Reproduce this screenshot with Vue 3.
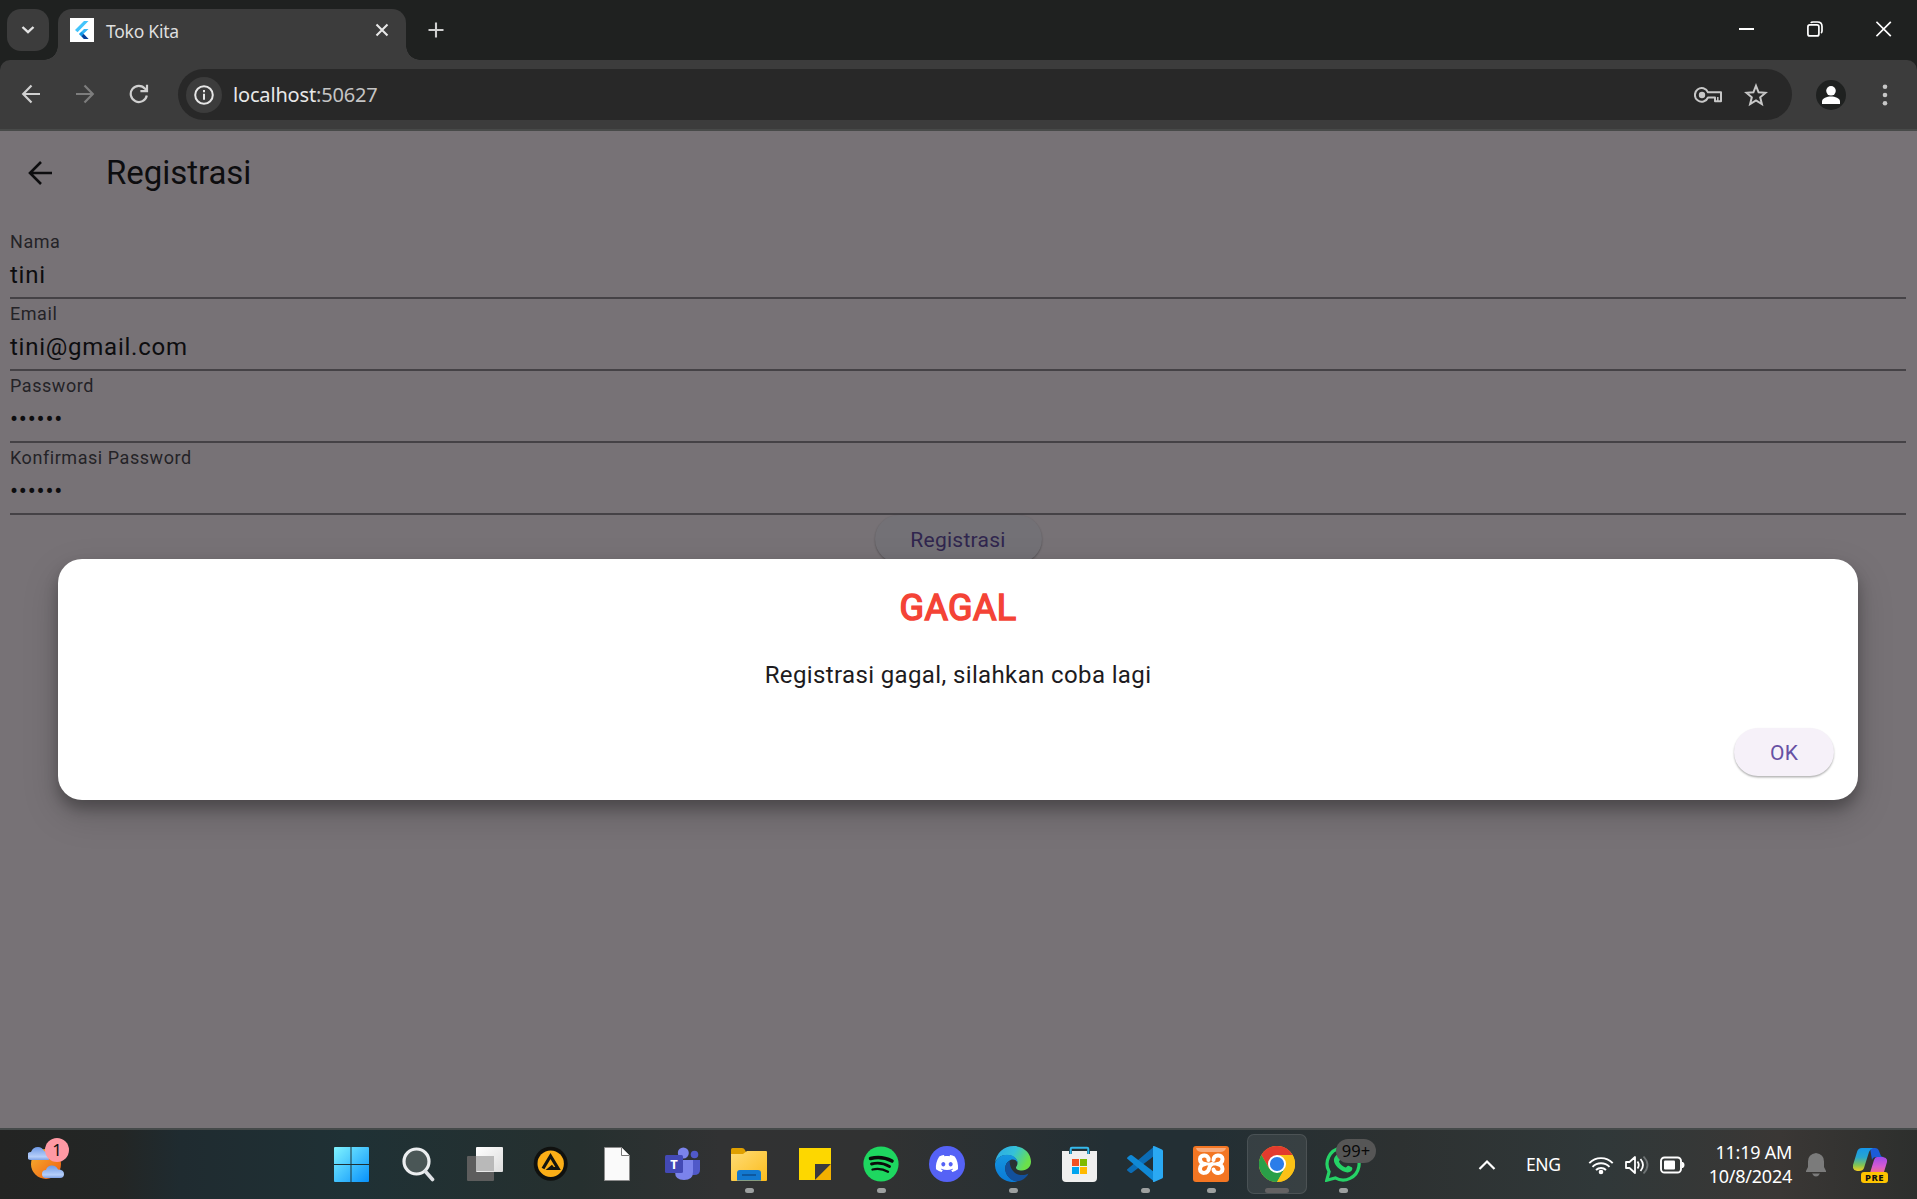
<script setup>
const fields = [
  { label: 'Nama', value: 'tini' },
  { label: 'Email', value: 'tini@gmail.com' },
  { label: 'Password', value: '••••••' },
  { label: 'Konfirmasi Password', value: '••••••' },
]
</script>

<template>
  <div class="desktop">
    <header class="tabstrip">
      <button class="tabsearch">
        <svg width="14" height="10" viewBox="0 0 14 10"><path d="M1.500 2l5.500 5.200L12.500 2" fill="none" stroke="#e3e3e3" stroke-width="2.400" /></svg>
      </button>
      <div class="tab">
        <svg class="favicon" width="24" height="24" viewBox="0 0 24 24">
          <rect width="24" height="24" fill="#fff" />
          <path d="M14 3h4.500L7.500 14.200 5 12z" fill="#43c4fb" />
          <path d="M14 11h4.500l-5.200 5 5.200 5H14l-5-5z" fill="#35b5f5" />
          <path d="M9.200 16l2.300-2.300 2.200 2.300-2.200 2.300z" fill="#1497e8" />
          <path d="M11.500 18.300l2.200-2.200 4.800 4.900H14z" fill="#0a3c96" />
        </svg>
        <span class="tab-title">Toko Kita</span>
        <svg class="tab-close" width="14" height="14" viewBox="0 0 14 14"><path d="M1.500 1.500l11 11m0-11l-11 11" stroke="#e8e8e8" stroke-width="2.100" /></svg>
      </div>
      <svg class="newtab" width="16" height="16" viewBox="0 0 16 16"><path d="M8 .5v15M.5 8h15" stroke="#cfcfcf" stroke-width="2.100" /></svg>
      <div class="winctl">
        <svg width="16" height="16" viewBox="0 0 16 16"><path d="M1 8h15" stroke="#fff" stroke-width="2" /></svg>
        <svg width="16" height="16" viewBox="0 0 16 16" fill="none" stroke="#fff" stroke-width="1.700"><rect x=".9" y="3.900" width="11" height="11" rx="2" /><path d="M3.800 1.900Q4.300 1 6 1h4.500Q15 1 15 5.500V10q0 1.400-1 2" /></svg>
        <svg width="16" height="16" viewBox="0 0 16 16"><path d="M.4.800l14.400 14.400m0-14.400L.4 15.200" stroke="#fff" stroke-width="1.700" /></svg>
      </div>
    </header>

    <nav class="toolbar">
      <svg class="nav" width="20" height="20" viewBox="0 0 20 20" fill="none" stroke="#d0d0d0" stroke-width="2.200"><path d="M19 10H2M10.500 1.500L2.200 10l8.300 8.500" /></svg>
      <svg class="nav fwd" width="20" height="20" viewBox="0 0 20 20" fill="none" stroke="#7d7d7d" stroke-width="2.200"><path d="M1 10h17M9.500 1.500l8.300 8.500-8.300 8.500" /></svg>
      <svg class="nav reload" width="20" height="20" viewBox="0 0 20 20" fill="none" stroke="#d0d0d0" stroke-width="2.200"><path d="M17.800 11.500a8.100 8.100 0 1 1-1.600-6.600L18 6.800M18 .8v6.300h-6.600" /></svg>
      <div class="omnibox">
        <span class="siteinfo">
          <svg width="20" height="20" viewBox="0 0 20 20"><circle cx="10" cy="10" r="8.800" fill="none" stroke="#e6e6e6" stroke-width="2" /><path d="M10 8.700v6M10 5v2.200" stroke="#e6e6e6" stroke-width="2" /></svg>
        </span>
        <span class="url">localhost<span class="port">:50627</span></span>
        <svg class="key" width="28" height="16" viewBox="0 0 28 16"><path d="M14 5.300h13v9h-6v-3.800h-7A6.800 6.800 0 1 1 14 5.300z" fill="none" stroke="#c7c7c7" stroke-width="2" stroke-linejoin="round" /><circle cx="8" cy="8" r="3.200" fill="#c7c7c7" /><path d="M23.800 10v4" stroke="#c7c7c7" stroke-width="1.500" /></svg>
        <svg class="star" width="24" height="24" viewBox="0 0 24 24"><path d="M12 2.800l2.600 6.500 7 .500-5.400 4.500 1.700 6.900L12 17.500l-5.900 3.700 1.700-6.900-5.400-4.500 7-.5z" fill="none" stroke="#c7c7c7" stroke-width="2" /></svg>
      </div>
      <svg class="avatar" width="30" height="30" viewBox="0 0 30 30"><circle cx="15" cy="15" r="15" fill="#1f2120" /><circle cx="15" cy="10.800" r="4.800" fill="#fff" /><path d="M6 24v-2.500c0-3.500 5-5 9-5s9 1.500 9 5V24z" fill="#fff" /></svg>
      <svg class="menu" width="6" height="24" viewBox="0 0 6 24" fill="#c7c7c7"><circle cx="3" cy="3.700" r="2.300" /><circle cx="3" cy="12" r="2.300" /><circle cx="3" cy="20.300" r="2.300" /></svg>
    </nav>

    <main class="page">
      <div class="appbar">
        <svg width="26" height="26" viewBox="0 0 26 26" fill="none" stroke="#0d0d0f" stroke-width="2.600"><path d="M25 13H3.500M14 2L3 13l11 11" /></svg>
        <h1>Registrasi</h1>
      </div>
      <form class="form">
        <div v-for="f in fields" :key="f.label" class="field">
          <label>{{ f.label }}</label>
          <div class="value">{{ f.value }}</div>
        </div>
        <div class="submit">Registrasi</div>
      </form>
      <section class="dialog">
        <h2>GAGAL</h2>
        <p>Registrasi gagal, silahkan coba lagi</p>
        <div class="ok">OK</div>
      </section>
    </main>

    <footer class="taskbar">
      <div class="weather">
        <svg width="38" height="36" viewBox="0 0 38 36">
          <defs>
            <linearGradient id="sun" x1="0" y1="0" x2="1" y2="1"><stop offset="0" stop-color="#f7b531" /><stop offset="1" stop-color="#ef5a10" /></linearGradient>
            <linearGradient id="cloud" x1="0" y1="0" x2="0" y2="1"><stop offset="0" stop-color="#6f9ae6" /><stop offset=".75" stop-color="#b6cffa" /><stop offset="1" stop-color="#7ea2e6" /></linearGradient>
          </defs>
          <circle cx="18" cy="18" r="15" fill="url(#sun)" />
          <path d="M3 14a4 4 0 0 1 0-8Q5 1 10 1q4 0 6 4 5 1 5 9z" fill="url(#cloud)" />
          <path d="M18 32a4 4 0 0 1 0-8q1-4 5-4.500 5-.5 7 4 6 0 6 4.500 0 4-4 4z" fill="url(#cloud)" />
        </svg>
        <span class="count">1</span>
      </div>

      <div class="apps">
        <div class="app">
          <svg viewBox="0 0 36 36"><defs><linearGradient id="win" gradientUnits="userSpaceOnUse" x1="1" y1="1" x2="36" y2="36"><stop offset="0" stop-color="#80f4ff" /><stop offset="1" stop-color="#0791fb" /></linearGradient></defs><path d="M2 1h15.500v17H1V2q0-1 1-1zM18.500 1H35q1 0 1 1v16H18.500zM1 19h16.500v17H2q-1 0-1-1zM18.500 19H36v16q0 1-1 1H18.500z" fill="url(#win)" /></svg>
        </div>
        <div class="app">
          <svg viewBox="0 0 36 36"><circle cx="17.500" cy="15.500" r="12.500" fill="#4a5656" stroke="#eceef0" stroke-width="3.200" /><path d="M26.500 25.500l7 8" stroke="#dfe2e6" stroke-width="3.600" stroke-linecap="round" /></svg>
        </div>
        <div class="app">
          <svg viewBox="0 0 36 36"><defs><linearGradient id="tv" x1="0" y1="0" x2="1" y2="1"><stop offset="0" stop-color="#fff" /><stop offset="1" stop-color="#dcdcdc" /></linearGradient></defs><rect y="10" width="27" height="25" rx="1" fill="#5d5d5d" /><rect x="9" y="1" width="27" height="25" rx="1" fill="url(#tv)" /><path d="M9 10h18v15H9z" fill="#b9b9b9" /></svg>
        </div>
        <div class="app">
          <svg viewBox="0 0 36 36"><circle cx="17.700" cy="17.700" r="17" fill="#10110f" /><circle cx="17.700" cy="17.700" r="13.200" fill="#fcaf17" /><path d="M10 22.500L17.500 10l7.500 12.500h-8l3-2.500" fill="none" stroke="#15150f" stroke-width="3.200" /></svg>
        </div>
        <div class="app">
          <svg viewBox="0 0 36 36"><path d="M5.500 1.500h17l8 8v25h-25z" fill="#fafafa" stroke="#8c8c8c" /><path d="M22.500 1.500v8h8" fill="#fff" stroke="#777" /></svg>
        </div>
        <div class="app">
          <svg viewBox="0 0 36 36"><circle cx="29.500" cy="8.500" r="3.800" fill="#5059c9" /><path d="M24 14h11v10q0 5-6 5h-5z" fill="#5059c9" /><circle cx="18.300" cy="7" r="5.500" fill="#7b83eb" /><path d="M10 14h18v12q0 8-9 8t-9-8z" fill="#7b83eb" /><rect y="9" width="18" height="18" rx="1.500" fill="#4349b5" /><text x="9" y="22.500" text-anchor="middle" font-size="13" font-weight="700" fill="#fff">T</text></svg>
        </div>
        <div class="app">
          <svg viewBox="0 0 36 36"><defs><linearGradient id="fold" x1="0" y1="0" x2="1" y2="1"><stop offset="0" stop-color="#ffdc75" /><stop offset="1" stop-color="#fbbc1d" /></linearGradient></defs><path d="M0 3.500Q0 2 1.500 2H11q2 0 3 2l2 4H0z" fill="#e0a000" /><path d="M0 8h12l4-3h19q1 0 1 1v28q0 1-1 1H1q-1 0-1-1z" fill="url(#fold)" /><path d="M6 34.500V27q0-3 3-3h18q3 0 3 3v7.500z" fill="#1278cf" /><path d="M11 29h14" stroke="#0c4e8f" stroke-width="1.500" /></svg>
          <i />
        </div>
        <div class="app">
          <svg viewBox="0 0 36 36"><path d="M2 2h32v16L18 34H2z" fill="#fdd700" /><path d="M18 34V18h16z" fill="#3a3a3e" /><path d="M34 18v16H18z" fill="#f3b100" /></svg>
        </div>
        <div class="app">
          <svg viewBox="0 0 36 36"><circle cx="18" cy="18" r="17.600" fill="#1ed760" /><g fill="none" stroke="#0b0b0b" stroke-linecap="round"><path d="M7.500 12.500q11-3 21.500 2.500" stroke-width="3.600" /><path d="M8.500 18q9.500-2.500 18 2.500" stroke-width="2.900" /><path d="M9.500 23.500q8-2 15.500 2.200" stroke-width="2.300" /></g></svg>
          <i />
        </div>
        <div class="app">
          <svg viewBox="0 0 36 36"><circle cx="18" cy="18" r="18" fill="#5562f6" /><path transform="translate(6.900 6.400) scale(.925)" fill="#fff" d="M20.317 4.370a19.791 19.791 0 00-4.885-1.515.074.074 0 00-.079.037c-.211.375-.445.865-.608 1.250-1.845-.276-3.680-.276-5.487 0-.164-.393-.406-.874-.618-1.250a.077.077 0 00-.079-.037 19.736 19.736 0 00-4.885 1.515.07.07 0 00-.032.028C.533 9.046-.319 13.580.099 18.058a.082.082 0 00.031.056c2.053 1.508 4.041 2.423 5.993 3.029a.078.078 0 00.084-.028c.462-.630.873-1.295 1.226-1.994a.076.076 0 00-.042-.106c-.653-.248-1.274-.550-1.872-.892a.077.077 0 01-.008-.128c.126-.094.252-.192.372-.291a.074.074 0 01.078-.011c3.928 1.793 8.180 1.793 12.061 0a.074.074 0 01.079.010c.120.099.246.198.373.292a.077.077 0 01-.007.128 12.299 12.299 0 01-1.873.891.077.077 0 00-.041.107c.360.698.772 1.363 1.225 1.993a.076.076 0 00.084.029c1.961-.607 3.950-1.522 6.002-3.029a.077.077 0 00.031-.055c.500-5.177-.838-9.674-3.549-13.660a.061.061 0 00-.031-.029zM8.020 15.331c-1.183 0-2.157-1.086-2.157-2.419 0-1.333.956-2.419 2.157-2.419 1.211 0 2.176 1.095 2.157 2.419 0 1.333-.956 2.419-2.157 2.419zm7.975 0c-1.183 0-2.157-1.086-2.157-2.419 0-1.333.955-2.419 2.157-2.419 1.211 0 2.176 1.095 2.157 2.419 0 1.333-.946 2.419-2.157 2.419z" /></svg>
        </div>
        <div class="app">
          <svg viewBox="0 0 36 36">
            <defs>
              <linearGradient id="eg" x1="0" y1="0" x2="1" y2=".4"><stop offset="0" stop-color="#2aa6e8" /><stop offset=".55" stop-color="#35c1d8" /><stop offset="1" stop-color="#6be04a" /></linearGradient>
              <linearGradient id="eb" x1="0" y1="0" x2="0" y2="1"><stop offset="0" stop-color="#1595e0" /><stop offset="1" stop-color="#0a7ad6" /></linearGradient>
            </defs>
            <path d="M0 17C1 7 9 0 18.500 0 29 0 36 7.500 36 15.500c0 5.500-4 9-9 9-4.500 0-6-1.500-6-3 0-1 1.500-1.800 1.500-4.500C22.500 12 17 9 12 9 6 9 1.500 12.500 0 17z" fill="url(#eg)" />
            <path d="M0 17.500C1.500 12 6.500 8.800 12 8.800c6 0 10.500 3.500 10.500 8-1-2.800-4-4-7-2.800C11 16 9 21 11 26.500c1.500 4.500 6 8 11.500 9C20 36.300 17 36 15 35.700 6 34.200-.5 26.500 0 17.500z" fill="url(#eb)" />
            <path d="M14.500 14.500C9.500 18 9 24 12 29c3.500 6 10 7.500 14 5.500 3.500-1.600 6-4 7.500-7-8 4-18.500.5-19-13z" fill="#12509c" />
          </svg>
          <i />
        </div>
        <div class="app">
          <svg viewBox="0 0 36 36"><path d="M9.700 9V3q0-1.200 1.200-1.200h15.200q1.200 0 1.200 1.200v6" fill="none" stroke="#35b9ec" stroke-width="2" /><path d="M1 5h7v3h3V5h15v3h3V5h7v27q0 4-4 4H5q-4 0-4-4z" fill="#efefef" /><path d="M11 13h7v7h-7z" fill="#f25022" /><path d="M19 13h7v7h-7z" fill="#7fba00" /><path d="M11 21h7v7h-7z" fill="#00a4ef" /><path d="M19 21h7v7h-7z" fill="#ffb900" /></svg>
        </div>
        <div class="app">
          <svg viewBox="0 0 36 36"><path d="M0 23.500q0 1 .8 1.600L3 26.700q1 .8 2 0L27 10V.5z" fill="#0b6cb5" /><path d="M0 12.500q0-1 .8-1.600L3 9.300q1-.8 2 0L27 26v9.500z" fill="#1089d6" /><path d="M26 .3q.8-.5 1.700 0L35 3.500q1 .5 1 1.500v26q0 1-1 1.500l-7.300 3.200q-.9.500-1.700 0z" fill="#2aa9f3" /></svg>
          <i />
        </div>
        <div class="app">
          <svg viewBox="0 0 36 36"><rect width="36" height="36" rx="3" fill="#f37623" /><path d="M3 2h30q-1 4-6 4H9Q4 6 3 2z" fill="#f8ab7c" /><g fill="none" stroke="#fff" stroke-width="4" stroke-linecap="round" stroke-linejoin="round"><path d="M15.500 14c1-5.500-8.500-6-8.500-1 0 3 2 4.500 5 5-3 .5-5 2-5 5 0 5.500 8.500 5 9-.5.200-2 1-3 3-4.500" /><path d="M20.500 14c-.5-5.500 9-6 9-1 0 3-2 4.500-5 5 3 .5 5 2 5 5 0 5.500-8.500 5-9 .5" /><path d="M12 18h12" stroke-width="3" /></g></svg>
          <i />
        </div>
        <div class="app active">
          <svg viewBox="0 0 36 36"><circle cx="18" cy="18" r="18" fill="#fbc116" /><path d="M18 9H33.590A18 18 0 0 0 2.410 9L10.200 22.500z" fill="#e33b2e" /><path d="M2.410 9A18 18 0 0 0 18 36l7.800-13.500L18 26l-7.800-3.500z" fill="#2a9f48" /><path d="M25.800 22.500L18 36A18 18 0 0 0 33.590 9H18z" fill="#fbc116" /><circle cx="18" cy="18" r="9" fill="#fff" /><circle cx="18" cy="18" r="7.100" fill="#2b7de9" /></svg>
          <i />
        </div>
        <div class="app">
          <svg viewBox="0 0 36 36"><path d="M1.800 34.200l2.300-8.500a16 16 0 1 1 6.200 6.200z" fill="none" stroke="#25d366" stroke-width="3.200" /><path d="M11 9.500c1-1.200 2.500-1.200 3 0l1.300 3c.5 1.300-1.300 2.400-1.300 3.200 1.500 2.800 3.600 4.700 6.500 5.800 1 0 1.800-2.300 3-1.800l3.300 1.600c1 .600.600 2.700-.5 3.700-1.800 1.600-4 1.800-6.800.800-5.500-2-9.700-6.800-10.500-10.500-.4-2.400.5-4.300 2-5.800z" fill="#25d366" /></svg>
          <i />
          <span class="unread">99+</span>
        </div>
      </div>

      <div class="tray">
        <svg class="chev" width="18" height="12" viewBox="0 0 18 12"><path d="M1.500 10L9 2.500l7.500 7.500" fill="none" stroke="#fff" stroke-width="2.200" /></svg>
        <span class="lang">ENG</span>
        <svg class="wifi" width="26" height="20" viewBox="0 0 26 20" fill="none" stroke="#fff" stroke-width="1.900"><path d="M1.300 8.200a16 16 0 0 1 23.400 0M4.500 11.800a12 12 0 0 1 17 0M8 15a7.200 7.200 0 0 1 10 0" /><circle cx="13" cy="17" r="2.300" fill="#fff" stroke="none" /></svg>
        <svg class="sound" width="26" height="20" viewBox="0 0 26 20" fill="none" stroke="#fff" stroke-width="1.800"><path d="M2 7h3.500L11 2v16l-5.500-5H2z" stroke-linejoin="round" /><path d="M13.500 6.500q2.500 3.500 0 7M16.500 4q5 6 0 12" /><path d="M19.500 1.500q8 8.500 0 17" stroke="#6f7475" /></svg>
        <svg class="battery" width="25" height="18" viewBox="0 0 25 18"><rect x="1" y="1.500" width="20" height="15" rx="3.500" fill="none" stroke="#fff" stroke-width="1.900" /><rect x="4" y="4.500" width="11" height="9" rx="1" fill="#fff" /><path d="M22 6h1q1.500 1 1.500 3T23 12h-1z" fill="#fff" /></svg>
        <div class="clock"><span>11:19 AM</span><span class="date">10/8/2024</span></div>
        <svg class="bell" width="20" height="24" viewBox="0 0 20 24" fill="#7b7b7b"><path d="M10 0q8 1 8 8.500V14l2 4v1H0v-1l2-4V8.500Q2 1 10 0zM6 20.500h8q-1.500 3-4 3t-4-3z" /></svg>
        <div class="copilot">
          <svg width="34" height="28" viewBox="0 0 34 28">
            <defs>
              <linearGradient id="c1" x1="0" y1="0" x2="0" y2="1"><stop offset="0" stop-color="#1696ea" /><stop offset=".4" stop-color="#28a6cf" /><stop offset=".75" stop-color="#83c452" /><stop offset="1" stop-color="#f3cd20" /></linearGradient>
              <linearGradient id="c2" x1="0" y1="0" x2="0" y2="1"><stop offset="0" stop-color="#a04bea" /><stop offset=".5" stop-color="#d65ad0" /><stop offset="1" stop-color="#fb7a60" /></linearGradient>
            </defs>
            <path d="M17 0h5q3 0 4 3l2 5q1 1 3 1h-8q-3 0-4 3z" fill="#1b5cd8" />
            <path d="M24 9h6q5 1 4 5l-3 10q-1 4-5 4H13q3 0 4-3l4-13q1-3 3-3z" fill="url(#c2)" />
            <path d="M9 0h11q-3 1-4 4l-5 16q-1 3-5 3H4q-5-1-4-6L4 4q1-4 5-4z" fill="url(#c1)" />
          </svg>
          <span class="pre">PRE</span>
        </div>
      </div>
    </footer>
  </div>
</template>

<style>
body { margin: 0; overflow: hidden; }
</style>

<style scoped>
.desktop { width: 1917px; height: 1199px; display: flex; flex-direction: column; background: #1f2120; font-family: "Noto Sans", sans-serif; overflow: hidden; }
.desktop svg { flex: none; display: block; }

.tabstrip { height: 60px; display: flex; align-items: flex-start; }
.tabsearch { margin: 9px 0 0 7px; width: 42px; height: 42px; padding: 0; border: 0; border-radius: 14px; background: #3c3c3c; display: grid; place-items: center; }
.tab { position: relative; box-sizing: border-box; margin: 9px 0 0 9px; width: 348px; height: 51px; padding-left: 12px; border-radius: 14px 14px 0 0; background: #3c3c3c; display: flex; align-items: flex-start; }
.tab::before, .tab::after { content: ""; position: absolute; bottom: 0; width: 14px; height: 14px; }
.tab::before { left: -14px; background: radial-gradient(circle at 0 0, transparent 13.500px, #3c3c3c 14px); }
.tab::after { right: -14px; background: radial-gradient(circle at 100% 0, transparent 13.500px, #3c3c3c 14px); }
.favicon { margin-top: 9px; }
.tab-title { margin: 9px 0 0 12px; width: 263px; font-size: 17.500px; line-height: 27px; letter-spacing: -.25px; color: #dfdfdf; white-space: nowrap; }
.tab-close { margin-top: 14px; margin-left: 6px; }
.newtab { margin: 22px 0 0 22px; }
.winctl { margin: 21px 25px 0 auto; display: flex; gap: 53px; }

.toolbar { height: 71px; box-sizing: border-box; border-bottom: 2px solid #484a49; border-radius: 10px 10px 0 0; background: #3c3c3c; display: flex; align-items: center; padding: 0 29px 0 21px; }
.nav { position: relative; top: -.5px; }
.fwd, .reload { margin-left: 34px; }
.omnibox { margin-left: 29px; width: 1614px; height: 51px; border-radius: 26px; background: #282828; display: flex; align-items: center; box-sizing: border-box; padding: 0 24px 0 8px; }
.siteinfo { width: 36px; height: 36px; border-radius: 50%; background: #3c3c3c; display: grid; place-items: center; }
.url { margin-left: 11px; font-size: 20px; line-height: 30px; letter-spacing: -.17px; color: #e8e8e8; }
.port { color: #c4c4c4; }
.key { margin-left: auto; }
.star { margin-left: 22px; }
.avatar { margin-left: 24px; }
.menu { margin-left: auto; }

.page { position: relative; height: 997px; background: #777276; font-family: Roboto, sans-serif; color: #0d0d0f; }
.appbar { height: 84px; display: flex; align-items: center; padding-left: 27px; }
.appbar h1 { margin: 0 0 0 53px; font-size: 33px; font-weight: 400; line-height: 42px; letter-spacing: -.05px; }
.form { padding: 12px 11px 0 10px; }
.field { height: 72px; box-sizing: border-box; border-bottom: 2px solid #454246; }
.field label { display: block; font-size: 18px; line-height: 30px; letter-spacing: .55px; color: #242327; }
.value { font-size: 24px; line-height: 36px; letter-spacing: .75px; white-space: nowrap; }
.submit { margin: 0 auto; width: 167px; height: 48px; border-radius: 24px; background: #737176; box-shadow: 0 1px 2px rgba(0, 0, 0, .3); text-align: center; font-size: 21px; line-height: 50px; letter-spacing: .25px; color: #30264e; font-weight: 400; }
.dialog { position: absolute; left: 58px; top: 428px; width: 1800px; height: 241px; box-sizing: border-box; padding: 24px; border-radius: 24px; background: #fff; box-shadow: 0 14px 36px rgba(0, 0, 0, .17), 0 9px 14px rgba(0, 0, 0, .26); display: flex; flex-direction: column; text-align: center; }
.dialog h2 { margin: 0; font-size: 36px; line-height: 50px; font-weight: 400; letter-spacing: .35px; color: #f44336; -webkit-text-stroke: 1.500px #f44336; }
.dialog p { margin: 24px 0 0; font-size: 24px; line-height: 36px; letter-spacing: .375px; color: #1d1b20; }
.ok { align-self: flex-end; margin-top: auto; width: 100px; height: 48px; border-radius: 24px; background: #f6f1f9; box-shadow: 0 1.500px 2px rgba(0, 0, 0, .3); font-size: 21px; line-height: 50px; letter-spacing: .15px; font-weight: 400; color: #6750a4; }

.taskbar { height: 71px; box-sizing: border-box; border-top: 2px solid #454a4a; display: flex; color: #fff; background: linear-gradient(90deg, #232423 0, #232625 120px, #1f2b30 180px, #1f3135 350px, #26302f 580px, #313233 720px, #313232 880px, #232f34 1110px, #232f34 1200px, #2d3131 1400px, #303839 1600px, #3a3735 1780px, #2d2f2d 1917px); }
.weather { position: relative; margin: 16px 0 0 28px; width: 38px; height: 36px; }
.count { position: absolute; left: 17px; top: -8px; width: 24px; height: 24px; border-radius: 50%; background: #ff99a4; color: #111; font-size: 17px; line-height: 24px; text-align: center; }
.apps { margin-left: 252px; display: flex; }
.app { position: relative; width: 66px; height: 69px; display: flex; flex-direction: column; align-items: center; box-sizing: border-box; padding-top: 16px; }
.app:nth-child(3) { margin-left: 2px; }
.app > svg { width: 36px; height: 36px; position: relative; }
.app i { width: 9px; height: 5px; margin-top: 6px; border-radius: 3px; background: #9da0a0; }
.active::before { content: ""; position: absolute; left: 3px; top: 4px; width: 58px; height: 58px; border: 1px solid rgba(255, 255, 255, .1); border-radius: 7px; background: rgba(255, 255, 255, .08); }
.active i { width: 24px; background: #646263; position: relative; }
.unread { position: absolute; left: 26px; top: 9px; width: 40px; height: 24px; border-radius: 12px; background: #565656; color: #090909; font-size: 16.500px; line-height: 24px; text-align: center; }
.tray { flex: 1; display: flex; align-items: center; padding: 0 29px 0 0; justify-content: flex-end; }
.lang { margin-left: 30px; width: 36px; font-size: 17.500px; line-height: 26px; letter-spacing: -.4px; position: relative; top: -.5px; }
.wifi { margin-left: 26px; }
.sound { margin-left: 10px; }
.battery { margin-left: 10px; }
.clock { margin: 0 0 2px 17px; width: 90px; display: flex; flex-direction: column; align-items: flex-end; font-size: 18px; line-height: 24px; letter-spacing: -.25px; white-space: nowrap; }
.bell { margin-left: 14px; }
.copilot { position: relative; margin-left: 27px; width: 35px; height: 34px; }
.pre { position: absolute; left: 8px; bottom: -1px; width: 27px; height: 11px; border-radius: 3px; background: #fec400; color: #111; font-size: 9.500px; font-weight: 800; line-height: 11px; letter-spacing: .5px; text-align: center; }
</style>
